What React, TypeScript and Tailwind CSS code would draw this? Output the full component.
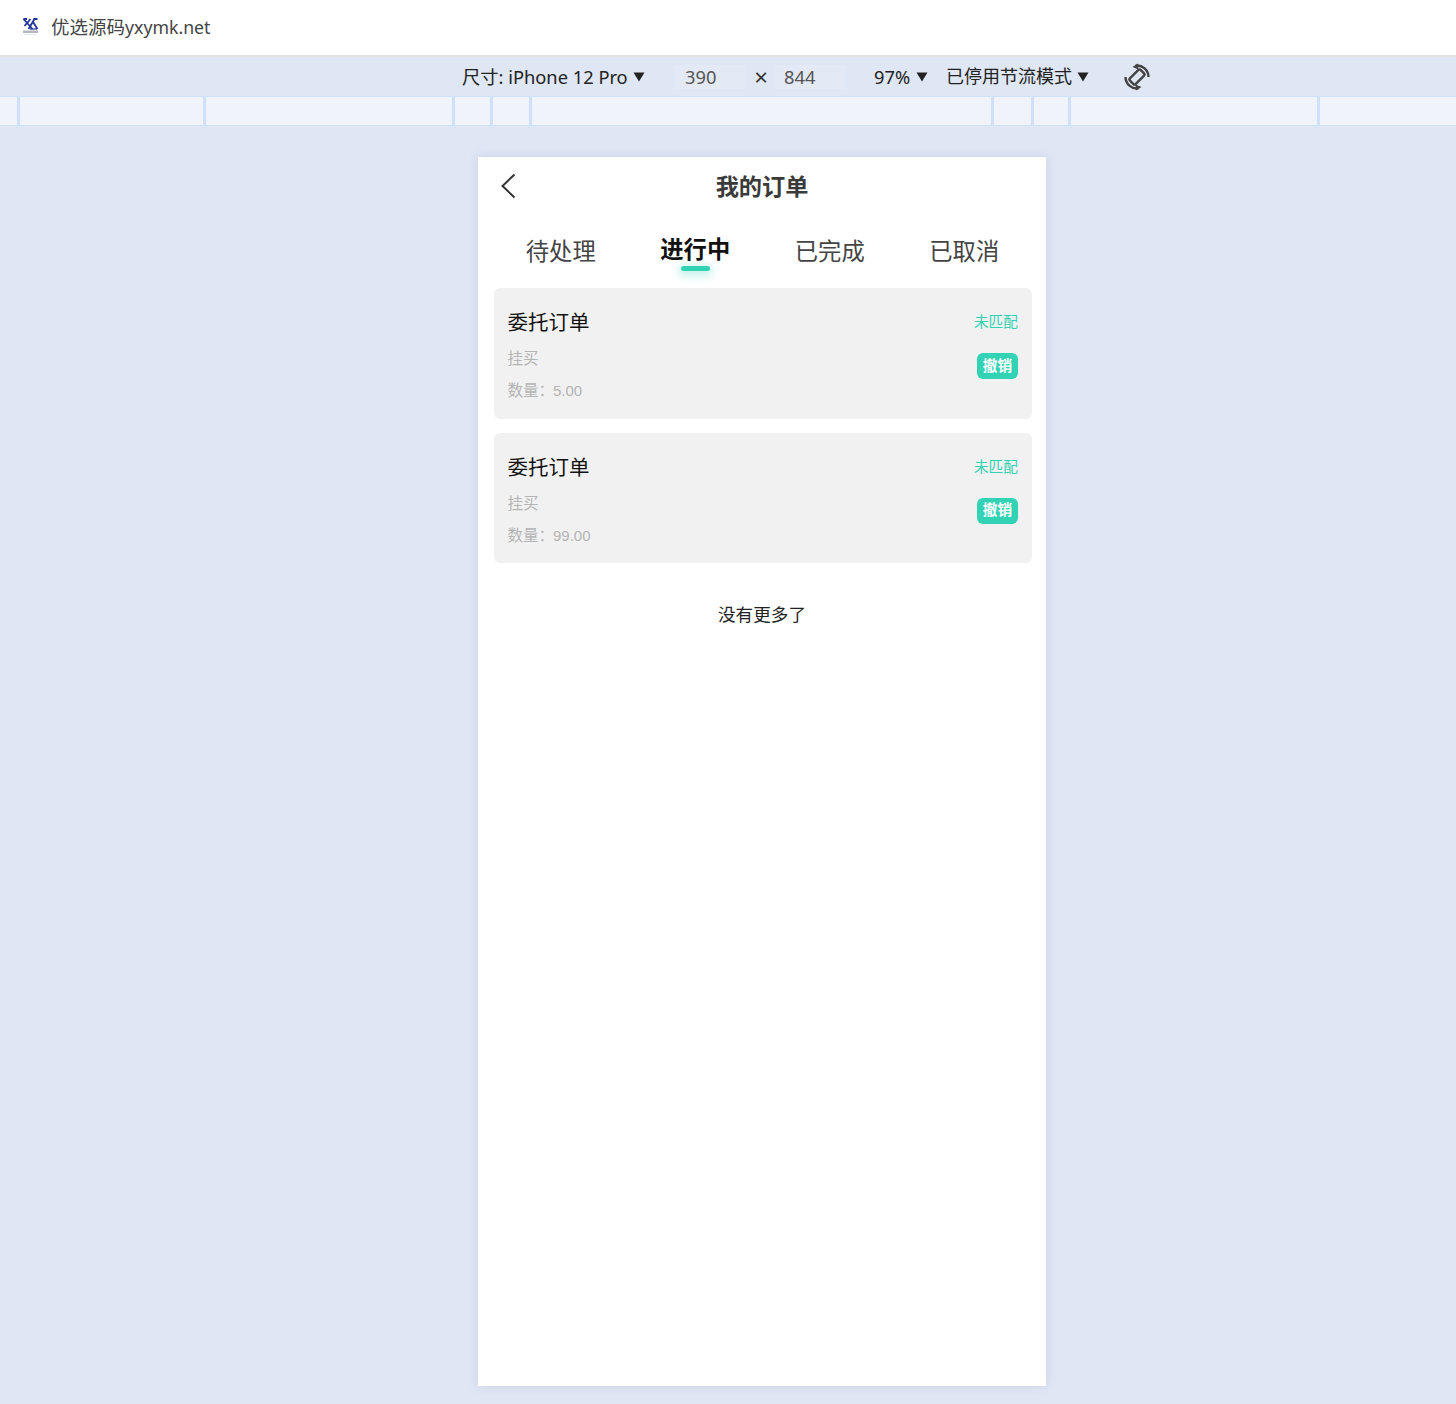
// Device-emulator page with a mobile "my orders" screen
const FONT = "font-['Noto_Sans','Noto_Sans_CJK_SC',sans-serif]"

// ruler cells: width of each cell, separator included
const RULER = [20, 186, 249, 38, 39, 462, 40, 37, 249]

const ORDERS = [
  { qty: '5.00' },
  { qty: '99.00' },
]

const TABS = ['待处理', '进行中', '已完成', '已取消']

function Logo() {
  return (
    <svg width="17" height="18" viewBox="0 0 17 18" className="shrink-0">
      <g fill="none" stroke="#22349a" strokeWidth="1.8">
        <path d="M1.5 1l9 10" />
        <path d="M8.5 1l-6 7" />
        <path d="M5 1h-3.5M15.5 1h-4" />
        <path d="M12.5 1l-6 10" />
        <path d="M11 4l4.5 7" />
        <path d="M8 11h7" strokeWidth="1.2" />
      </g>
      <rect x="1" y="12.5" width="15" height="2.5" fill="#b4b7c0" />
      <rect x="2" y="16" width="13" height="1" fill="#e6e7ea" />
    </svg>
  )
}

function Caret() {
  return (
    <svg width="12" height="10" viewBox="0 0 12 10" className="shrink-0">
      <path d="M0.5 0.5h11L6 9.5z" fill="#222" />
    </svg>
  )
}

function RotateIcon() {
  return (
    <svg width="30" height="30" viewBox="0 0 30 30" fill="none" stroke="#444" strokeWidth="2.4">
      <rect x="11" y="7.5" width="8" height="15" rx="1.5" transform="rotate(45 15 15)" />
      <path d="M13.5 3.6A11.5 11.5 0 0 1 26.5 15" />
      <path d="M16.5 26.4A11.5 11.5 0 0 1 3.5 15" />
      <path d="M10.5 5l5.5-3.5.5 6z" fill="#444" stroke="none" />
      <path d="M19.5 25l-5.5 3.5-.5-6z" fill="#444" stroke="none" />
    </svg>
  )
}

function OrderCard({ qty }: { qty: string }) {
  return (
    <div className="flex h-[130.5px] justify-between rounded-[6px] bg-[#f1f1f1] pl-[13.5px] pr-[14px]">
      <div className="flex flex-col">
        <div className="mt-[19px] h-[30px] text-[20.5px] leading-[30px] text-[#111]">委托订单</div>
        <div className="mt-[10px] h-[22px] text-[15.5px] leading-[22px] text-[#b4b4b4]">挂买</div>
        <div className="mt-[10px] h-[22px] text-[15.5px] leading-[22px] text-[#b4b4b4]">
          数量：<span className="ml-[-1px] font-['Liberation_Sans',sans-serif] text-[15px]">{qty}</span>
        </div>
      </div>
      <div className="flex flex-col items-end">
        <div className="mt-[22px] h-[22px] text-[14.7px] leading-[22px] text-[#33d1b3]">未匹配</div>
        <div className="mt-[21px] flex h-[26px] w-[41px] items-center justify-center rounded-[6px] bg-[#32d2b4] pb-[2px] text-[14.7px] font-bold text-white">
          撤销
        </div>
      </div>
    </div>
  )
}

export default function App() {
  return (
    <div className={`flex h-[1404px] flex-col overflow-hidden bg-[#dfe6f4] ${FONT}`}>
      {/* top bar */}
      <div className="flex h-[57px] shrink-0 items-center border-b-2 border-[#e3e3e3] bg-white pb-[2px] pl-[22px]">
        <Logo />
        <span className="ml-[12px] text-[18.5px] text-[#444]">
          优选源码<span className="text-[17.7px]">yxymk.net</span>
        </span>
      </div>

      {/* device toolbar */}
      <div className="flex h-[39px] shrink-0 items-center text-[18.3px] text-[#222]">
        <span className="ml-[462px] w-[166px] whitespace-nowrap">尺寸: iPhone 12 Pro</span>
        <span className="ml-[5px]"><Caret /></span>
        <span className="ml-[30px] flex h-[24px] w-[70px] items-center bg-[#e3e9f5] pl-[10px] text-[#555]">390</span>
        <span className="ml-[9px] w-[14px] text-center text-[24px] leading-[24px] text-[#333]">×</span>
        <span className="ml-[7px] flex h-[24px] w-[70px] items-center bg-[#e3e9f5] pl-[9px] text-[#555]">844</span>
        <span className="ml-[29px] w-[37px] whitespace-nowrap">97%</span>
        <span className="ml-[5px]"><Caret /></span>
        <span className="ml-[18px] w-[126px] whitespace-nowrap text-[18px]">已停用节流模式</span>
        <span className="ml-[5px]"><Caret /></span>
        <span className="ml-[33px]"><RotateIcon /></span>
      </div>

      {/* ruler */}
      <div className="flex h-[30px] shrink-0 border-y border-[#cfe0fb] bg-[#f0f4fa]">
        {RULER.map((w, i) => (
          <div key={i} className="h-[28px] border-r-[3px] border-[#cfe0fb]" style={{ width: w }} />
        ))}
      </div>

      {/* phone */}
      <div className="ml-[478px] mt-[31px] flex h-[1229px] w-[568px] flex-col bg-white shadow-[0_0_10px_rgba(120,140,190,0.2)]">
        <div className="relative flex h-[60px] shrink-0 items-center justify-center pb-[2px]">
          <svg width="16" height="26" viewBox="0 0 16 26" fill="none" stroke="#333" strokeWidth="2" className="absolute left-[22px] top-[16px]">
            <path d="M14.5 1.5L2.5 13l12 11.5" />
          </svg>
          <span className="text-[23.2px] font-bold text-[#3a3a3a]">我的订单</span>
        </div>

        <div className="ml-[15.5px] mr-[14.5px] grid h-[71px] shrink-0 grid-cols-4">
          {TABS.map((t, i) =>
            i === 1 ? (
              <div key={t} className="flex flex-col items-center">
                <span className="mt-[15px] h-[34px] text-[23.3px] font-bold leading-[34px] text-[#111]">{t}</span>
                <span className="h-[5px] w-[29px] rounded-full bg-[#32d2b4] shadow-[0_2px_9px_3px_rgba(50,210,180,0.28)]" />
              </div>
            ) : (
              <div key={t} className="flex flex-col items-center">
                <span className="mt-[17px] h-[35px] text-[23.3px] leading-[35px] text-[#444]">{t}</span>
              </div>
            ),
          )}
        </div>

        <div className="ml-[16px] mr-[14px] flex flex-col gap-[14px]">
          {ORDERS.map((o) => (
            <OrderCard key={o.qty} qty={o.qty} />
          ))}
        </div>

        <div className="mt-[37.5px] text-center text-[17.6px] leading-[26px] text-[#222]">没有更多了</div>
      </div>
    </div>
  )
}
